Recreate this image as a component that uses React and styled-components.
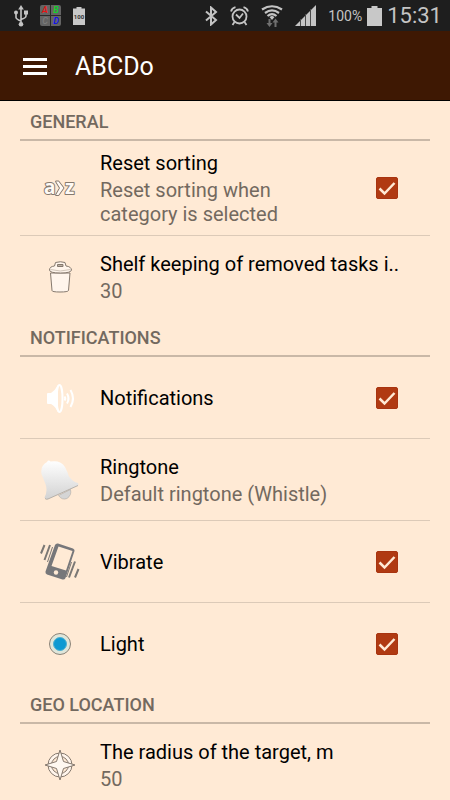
import React, { useState } from "react";
import styled, { createGlobalStyle } from "styled-components";

function App() {
  const [checked, setChecked] = useState({
    sorting: true,
    notifications: true,
    vibrate: true,
    light: true,
  });

  const toggle = (event) => {
    const { name, checked: value } = event.target;
    setChecked((prev) => ({ ...prev, [name]: value }));
  };

  return (
    <Screen>
      <GlobalStyle />
      <StatusBar>
        <StatusGroup>
          <UsbIcon />
          <AppBadge />
          <SmallBattery />
        </StatusGroup>
        <StatusGroup>
          <BluetoothIcon />
          <AlarmIcon />
          <WifiIcon />
          <SignalIcon />
          <PowerGroup>
            <Percent>100%</Percent>
            <BatteryIcon />
            <Clock>15:31</Clock>
          </PowerGroup>
        </StatusGroup>
      </StatusBar>

      <AppBar>
        <MenuButton type="button" aria-label="Menu">
          <MenuBar />
          <MenuBar />
          <MenuBar />
        </MenuButton>
        <AppTitle>ABCDo</AppTitle>
      </AppBar>

      <List>
        <section>
          <SectionTitle>GENERAL</SectionTitle>
          <CheckRow
            name="sorting"
            icon={<SortIcon />}
            title="Reset sorting"
            summary="Reset sorting when category is selected"
            checked={checked.sorting}
            onChange={toggle}
          />
          <ValueRow
            icon={<TrashIcon />}
            title="Shelf keeping of removed tasks i.."
            summary="30"
            $last
          />
        </section>

        <section>
          <SectionTitle>NOTIFICATIONS</SectionTitle>
          <CheckRow
            name="notifications"
            icon={<SpeakerIcon />}
            title="Notifications"
            checked={checked.notifications}
            onChange={toggle}
          />
          <ValueRow
            icon={<BellIcon />}
            title="Ringtone"
            summary="Default ringtone (Whistle)"
          />
          <CheckRow
            name="vibrate"
            icon={<VibrateIcon />}
            title="Vibrate"
            checked={checked.vibrate}
            onChange={toggle}
          />
          <CheckRow
            name="light"
            icon={<LightIcon />}
            title="Light"
            checked={checked.light}
            onChange={toggle}
            $last
          />
        </section>

        <section>
          <SectionTitle>GEO LOCATION</SectionTitle>
          <ValueRow
            icon={<TargetIcon />}
            title="The radius of the target, m"
            summary="50"
          />
        </section>
      </List>
    </Screen>
  );
}

// row with a checkbox
function CheckRow({ name, icon, title, summary, checked, onChange, $last }) {
  return (
    <Row as="label" $last={$last}>
      <IconCell>{icon}</IconCell>
      <TextCell>
        <RowTitle>{title}</RowTitle>
        {summary && <Summary>{summary}</Summary>}
      </TextCell>
      <CheckCell>
        <Checkbox
          type="checkbox"
          name={name}
          checked={checked}
          onChange={onChange}
        />
        {checked && (
          <CheckMark viewBox="0 0 22 22" aria-hidden="true">
            <path d="M3.5 11.5L8.5 16.5L18.5 6" />
          </CheckMark>
        )}
      </CheckCell>
    </Row>
  );
}

function ValueRow({ icon, title, summary, $last }) {
  return (
    <Row type="button" $last={$last}>
      <IconCell>{icon}</IconCell>
      <TextCell $wide>
        <RowTitle>{title}</RowTitle>
        <Summary>{summary}</Summary>
      </TextCell>
    </Row>
  );
}

/* status bar icons */

const UsbIcon = () => (
  <svg width="14" height="22" viewBox="0 0 14 22" fill="none" stroke="#c4c4c4" strokeWidth="1.6">
    <path d="M7 3V19M2 8.500V12.500Q2 14 7 16M12 8V11Q12 13 7 14.500" />
    <path d="M7 0L9.800 4.500H4.200Z" fill="#c4c4c4" stroke="none" />
    <circle cx="7" cy="19.300" r="2.300" fill="#c4c4c4" stroke="none" />
    <circle cx="2" cy="7.500" r="2" fill="#c4c4c4" stroke="none" />
    <path d="M10 5.500h4v4h-4z" fill="#c4c4c4" stroke="none" />
  </svg>
);

const AppBadge = () => (
  <svg width="21" height="21" viewBox="0 0 21 21" fontFamily="Roboto, sans-serif" fontSize="9" fontStyle="italic" fontWeight="500" textAnchor="middle">
    <rect width="21" height="21" rx="2" fill="#646464" />
    <path d="M10.500 0V21M0 10.500H21" stroke="#2a2a2a" />
    <text x="5" y="8" fill="#f01010">A</text>
    <text x="16" y="8" fill="#10d828">B</text>
    <text x="5" y="19" fill="#7c7c7c">C</text>
    <text x="16" y="19" fill="#1010f4">D</text>
  </svg>
);

const SmallBattery = () => (
  <svg width="12" height="18" viewBox="0 0 12 18">
    <path d="M3.500 0H8.500V1.500H12V18H0V1.500H3.500Z" fill="#c8c8c8" />
    <text x="6" y="12" fill="#333333" fontFamily="Roboto, sans-serif" fontSize="6" fontWeight="700" textAnchor="middle">100</text>
  </svg>
);

const BluetoothIcon = () => (
  <svg width="13" height="20" viewBox="0 0 13 20" fill="none" stroke="#c4c4c4" strokeWidth="2">
    <path d="M1 5.500L11 14L6 18.500V1.500L11 6L1 14.500" />
  </svg>
);

const AlarmIcon = () => (
  <svg width="19" height="20" viewBox="0 0 19 20" fill="none" stroke="#c4c4c4" strokeWidth="1.8">
    <circle cx="9.500" cy="10.500" r="7" />
    <path d="M6 8.500L9.500 12L13 7.500M1 5.500Q2 2 5.500 1.200M18 5.500Q17 2 13.500 1.200M4.500 16L2.500 19M14.500 16L16.500 19" />
  </svg>
);

const WifiIcon = () => (
  <svg width="22" height="22" viewBox="0 0 22 22" fill="none" stroke="#c4c4c4" strokeWidth="2.200">
    <path d="M1 4.500Q11 -2 21 4.500M4 8Q11 2.800 18 8M6.500 11Q11 7.400 15.500 11" />
    <path d="M8.500 12L11 10.800L13.500 12L11 15Z" fill="#c4c4c4" stroke="none" />
    <path d="M8.500 14V20M14.500 22V16" stroke="#707070" strokeWidth="2" />
    <path d="M5.500 18H11.500L8.500 22ZM11.500 17.500H17.500L14.500 13.500Z" fill="#707070" stroke="none" />
  </svg>
);

const SignalIcon = () => (
  <svg width="21" height="21" viewBox="0 0 21 21">
    <path d="M0 21L21 0V21Z" fill="#c4c4c4" />
    <path d="M5.500 14V21M10.500 9V21M15.500 4V21" stroke="#4a4a4a" />
  </svg>
);

const BatteryIcon = () => (
  <svg width="15" height="20" viewBox="0 0 15 20">
    <path d="M4.500 0H10.500V2H15V20H0V2H4.500Z" fill="#c8c8c8" />
  </svg>
);

/* row icons */

const SortIcon = () => (
  <RowIcon viewBox="0 0 40 40">
    <g
      fill="#fffaf5"
      stroke="#85796e"
      strokeWidth="2"
      strokeLinejoin="round"
      paintOrder="stroke"
      fontFamily="Open Sans, sans-serif"
      fontSize="19"
      fontWeight="700"
    >
      <text x="4" y="26">a</text>
      <text x="25" y="26">z</text>
      <path d="M16 13.500H18.500L23.500 20L18.500 27H16L20 20Z" strokeWidth="1.800" />
    </g>
  </RowIcon>
);

const TrashIcon = () => (
  <RowIcon viewBox="0 0 40 40" fill="#fff5ec" stroke="#85796e" strokeWidth="1">
    <path d="M10.500 16L12 33.500Q12 35 20 35Q28 35 28.500 33.500L30 16Z" />
    <path d="M9.500 13Q9.500 9.500 14.500 9L15.500 5.500Q20.500 4 25 5.500L26 9Q31 9.500 31.500 13Q31 16 20.500 16Q9.500 16 9.500 13Z" />
    <path d="M17.500 9.500V7.500H23V9.500Z" fill="#bdb0a3" />
    <path d="M10.500 12.500Q20 15.500 30.500 12.500" stroke="#d0c4b8" fill="none" />
  </RowIcon>
);

const SpeakerIcon = () => (
  <RowIcon viewBox="0 0 40 40" fill="none" stroke="#ffffff" strokeWidth="2">
    <path d="M7 16Q7 15 8 15H11Q15 12.500 18 7V34Q15 28 11 26H8Q7 26 7 25Z" fill="#ffffff" stroke="none" />
    <ellipse cx="19.500" cy="20.500" rx="3" ry="13.500" />
    <path d="M24.500 18.500Q26 20.500 24.500 22.500M27 15.500Q30 20.500 27 25.500M30.500 12Q35.500 20.500 30.500 29" />
  </RowIcon>
);

const BellIcon = () => (
  <RowIcon viewBox="0 0 40 40">
    <defs>
      <linearGradient id="bell" x1="0" y1="0" x2="0" y2="1">
        <stop offset="0" stopColor="#ffffff" />
        <stop offset="1" stopColor="#d2d2d2" />
      </linearGradient>
    </defs>
    <path d="M18.500 35.500L30.500 29.500Q32 35 27 38.500Q22 40.500 18.500 35.500Z" fill="#d5d5d5" stroke="#a9a39c" strokeWidth="0.500" />
    <path
      d="M7 2Q8.500 -0.500 10.500 1.500Q21 0 25 7Q28 13 29 16.500Q33 22 38 23Q39 25 37.500 26L8 39Q5.500 40 4.500 37.500Q8 31 5.500 24L1.500 14Q0 6 7 2Z"
      fill="url(#bell)"
    />
    <path d="M5 38.500Q6.500 39.800 8 39L38 25.500" fill="none" stroke="#aaa49e" strokeWidth="0.800" />
  </RowIcon>
);

const VibrateIcon = () => (
  <RowIcon viewBox="0 0 40 40" fill="none" stroke="#7b7875" strokeWidth="2">
    <path
      d="M18 1.500L33 6.500Q35 7.500 34.500 9L25.500 36Q24.500 38 22.500 37.500L7 32.500Q5 31.500 5.500 29.500L15 3Q16 1 18 1.500ZM18.500 4.500L11.500 24L26 28.500L32.500 9Z"
      fill="#77777a"
      fillRule="evenodd"
      stroke="none"
    />
    <circle cx="16" cy="30.500" r="2.200" fill="#ffead5" stroke="none" />
    <path d="M4.500 3L1 11.500M10 3L4.500 18M35 19.500L29 35.500M38.500 27L35 35.500" />
    <path d="M12.500 5L7.500 20M31.500 20L26.500 35" strokeWidth="1" />
  </RowIcon>
);

const LightIcon = () => (
  <RowIcon viewBox="0 0 40 40">
    <circle cx="20" cy="20" r="10.500" fill="#dfe6da" stroke="#8b8378" />
    <circle cx="20" cy="20" r="6.500" fill="#0d99d2" stroke="#4fb0d0" />
  </RowIcon>
);

const TargetIcon = () => (
  <RowIcon viewBox="0 0 40 40" fill="none" stroke="#85796e" strokeWidth="1">
    <circle cx="20" cy="20" r="12" fill="#fff5ec" />
    <circle cx="20" cy="20" r="8.500" fill="#ffead5" />
    <path d="M20 5L23.500 16.500L35 20L23.500 23.500L20 35L16.500 23.500L5 20L16.500 16.500Z" fill="#fff8f0" />
  </RowIcon>
);

const GlobalStyle = createGlobalStyle`
  * {
    box-sizing: border-box;
  }

  body {
    margin: 0;
    background-color: #ffead5;
    font-family: Roboto, sans-serif;
  }
`;

//  전체 화면
const Screen = styled.div`
  display: flex;
  flex-direction: column;
  width: 100%;
  height: 100vh;
  background-color: #ffead5;
`;

// 상태바
const StatusBar = styled.div`
  flex: none;
  display: flex;
  align-items: center;
  justify-content: space-between;
  height: 31px;
  padding: 0 8px 0 14px;
  background-color: #1e1e1e;
  color: #c4c4c4;

  svg {
    flex: none;
  }
`;

const StatusGroup = styled.div`
  display: flex;
  align-items: center;
  gap: 12px;
`;

const PowerGroup = styled.div`
  display: flex;
  align-items: center;
  gap: 5px;
`;

const Percent = styled.span`
  font-size: 14px;
`;

const Clock = styled.span`
  font-size: 22px;
`;

// 상단 앱바
const AppBar = styled.header`
  flex: none;
  display: flex;
  align-items: center;
  gap: 28px;
  height: 70px;
  padding: 2px 23px 0;
  background-color: #3e1803;
  border-bottom: 1px solid #000000;
`;

const MenuButton = styled.button`
  display: flex;
  flex-direction: column;
  gap: 4px;
  width: 24px;
  padding: 0;
  border: none;
  background: none;
  cursor: pointer;
`;

const MenuBar = styled.span`
  height: 3px;
  background-color: #ffffff;
`;

const AppTitle = styled.h1`
  margin: 0;
  color: #ffffff;
  font-size: 25px;
  font-weight: 400;
`;

// 설정 목록
const List = styled.main`
  flex: 1;
  min-height: 0;
  padding: 0 20px;
  overflow-y: auto;
  scrollbar-width: none;
`;

const SectionTitle = styled.h2`
  display: flex;
  align-items: center;
  height: 40px;
  margin: 0;
  padding: 3px 10px 0;
  border-bottom: 2px solid #c9b8a7;
  color: #73695f;
  font-size: 18px;
  font-weight: 500;
`;

const Row = styled.button`
  display: flex;
  align-items: center;
  width: 100%;
  min-height: ${({ $last }) => ($last ? "81px" : "82px")};
  padding: 9px 0;
  border: none;
  border-bottom: ${({ $last }) => ($last ? "none" : "1px solid #dccab8")};
  background: none;
  font-family: inherit;
  text-align: left;
  cursor: pointer;
`;

const IconCell = styled.span`
  flex: none;
  display: flex;
  justify-content: center;
  width: 80px;
`;

const RowIcon = styled.svg`
  width: 40px;
  height: 40px;
`;

const TextCell = styled.span`
  flex: 1;
  min-width: 0;
  display: flex;
  flex-direction: column;
  gap: 2px;
  padding-right: ${({ $wide }) => ($wide ? "20px" : "0")};
`;

const RowTitle = styled.span`
  color: #000000;
  font-size: 20px;
  line-height: 26px;
  white-space: nowrap;
`;

const Summary = styled.span`
  color: #73695f;
  font-size: 20px;
  line-height: 24px;
`;

const CheckCell = styled.span`
  flex: none;
  display: grid;
  place-items: center;
  width: 86px;
`;

const Checkbox = styled.input`
  grid-area: 1 / 1;
  appearance: none;
  width: 22px;
  height: 22px;
  margin: 0;
  border: 1px solid #a83410;
  border-radius: 2px;
  background-color: ${({ checked }) => (checked ? "#b03a12" : "transparent")};
  cursor: pointer;
`;

const CheckMark = styled.svg`
  grid-area: 1 / 1;
  width: 22px;
  height: 22px;
  fill: none;
  stroke: #ffead5;
  stroke-width: 2.5;
  pointer-events: none;
`;

export default App;
